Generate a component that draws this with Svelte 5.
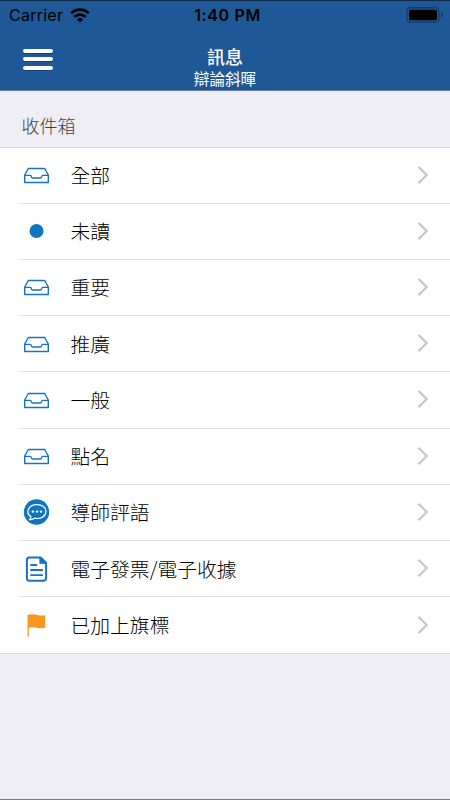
<script lang="ts">
  type Icon = 'tray' | 'dot' | 'chat' | 'document' | 'flag';

  interface Mailbox {
    label: string;
    icon: Icon;
  }

  export let title = '訊息';
  export let subtitle = '辯論斜暉';
  export let mailboxes: Mailbox[] = [
    { label: '全部', icon: 'tray' },
    { label: '未讀', icon: 'dot' },
    { label: '重要', icon: 'tray' },
    { label: '推廣', icon: 'tray' },
    { label: '一般', icon: 'tray' },
    { label: '點名', icon: 'tray' },
    { label: '導師評語', icon: 'chat' },
    { label: '電子發票/電子收據', icon: 'document' },
    { label: '已加上旗標', icon: 'flag' }
  ];
</script>

<div class="screen">
  <header class="header">
    <div class="status">
      <div class="status__carrier">
        <span>Carrier</span>
        <svg width="20" height="15" viewBox="0 0 20 15" fill="none" stroke="#000" stroke-width="2.6">
          <path d="M1.2 5.2a12.6 12.6 0 0 1 17.6 0" />
          <path d="M4.3 8.9a8.2 8.2 0 0 1 11.4 0" />
          <path d="M10 14.6l-3-3.1a4.3 4.3 0 0 1 6 0z" fill="#000" stroke="none" />
        </svg>
      </div>
      <span class="status__time">1:40 PM</span>
      <svg class="status__battery" width="38" height="16" viewBox="0 0 38 16">
        <rect x="1" y=".8" width="32" height="14.4" rx="3.5" fill="none" stroke="#123a66" stroke-width="1.2" />
        <rect x="3" y="2.8" width="28" height="10.4" rx="1.5" />
        <path d="M35 5.2q2.2 1 2.2 2.8t-2.2 2.8z" fill="#123a66" />
      </svg>
    </div>
    <div class="nav">
      <button class="nav__menu" aria-label="選單">
        <span></span>
        <span></span>
        <span></span>
      </button>
      <div class="nav__titles">
        <h1>{title}</h1>
        <p>{subtitle}</p>
      </div>
    </div>
  </header>

  <h2 class="section">收件箱</h2>

  <ul class="list">
    {#each mailboxes as mailbox}
      <li class="row">
        <span class="row__icon">
          {#if mailbox.icon === 'tray'}
            <svg width="27" height="28" viewBox="0 0 27 28" fill="none" stroke="#1473c2" stroke-width="1.4" stroke-linejoin="round">
              <path d="M1.700 14L5.300 7.500h16.400l3.600 6.500v7.500H1.700z" />
              <path d="M1.700 14.400h5.500q.9 0 1.200 1.200.3 1.400 1.300 1.400h7.600q1 0 1.300-1.400.3-1.200 1.200-1.200h5.500" />
            </svg>
          {:else if mailbox.icon === 'dot'}
            <svg width="27" height="28" viewBox="0 0 27 28">
              <circle cx="13.5" cy="14" r="7" fill="#1074bf" />
            </svg>
          {:else if mailbox.icon === 'chat'}
            <svg width="27" height="28" viewBox="0 0 27 28">
              <circle cx="13.5" cy="14" r="12.7" fill="#1074bf" />
              <path d="M8 18.8C2.8 15.7 4.2 6.6 14.1 6.6c5.3 0 8.8 3 8.8 6.9 0 4.8-5 8-11.3 6.7-1.5 1.1-3.3 1.6-5.2 1.4 1-.8 1.6-1.7 1.6-2.8z" fill="none" stroke="#fff" stroke-width="1.2" stroke-linejoin="round" />
              <g fill="#fff">
                <circle cx="9.9" cy="13.6" r="1.2" />
                <circle cx="14" cy="13.6" r="1.2" />
                <circle cx="18" cy="13.6" r="1.2" />
              </g>
            </svg>
          {:else if mailbox.icon === 'document'}
            <svg width="27" height="28" viewBox="0 0 27 28" fill="none" stroke="#1473c2" stroke-width="2" stroke-linecap="round" stroke-linejoin="round">
              <path d="M17.600 2.500H6.400A2.500 2.500 0 0 0 3.900 5v18.200a2.500 2.500 0 0 0 2.500 2.500h14.200a2.500 2.500 0 0 0 2.500-2.500V7.800z" />
              <path d="M17 2.700v5.500h5.800z" fill="#1473c2" stroke-width="1.3" />
              <path d="M8 10h5.500M8 15h11.200M8 20.200h11.200" stroke-width="1.8" />
            </svg>
          {:else}
            <svg width="27" height="28" viewBox="0 0 27 28" fill="#f8961d">
              <path d="M4.500 4.100C8 2.600 11 3.200 14 3.900c3 .7 5.500.7 8.200.3v12.500c-3 .9-5.400.7-8.200 0-2.800-.7-5.500-.7-8.200 0v8.800H4.500z" />
            </svg>
          {/if}
        </span>
        <span class="row__content">
          <span>{mailbox.label}</span>
          <svg width="12" height="20" viewBox="0 0 12 20" fill="none" stroke="#c6c6ca" stroke-width="2.3">
            <path d="M1.400 1.700L9.700 10l-8.300 8.300" />
          </svg>
        </span>
      </li>
    {/each}
  </ul>
</div>

<style>
  :global(body) {
    margin: 0;
    background: #efeef4;
  }

  .screen {
    box-sizing: border-box;
    height: 800px;
    overflow: hidden;
    border-bottom: 1px solid #77767a;
    background: #efeef4;
    color: #000;
    font-family: 'Noto Sans CJK TC', sans-serif;
  }

  .header {
    box-sizing: border-box;
    height: 91px;
    border-top: 1px solid #0f2c4c;
    border-bottom: 1px solid #6b82a8;
    background: #1e5896;
    color: #fff;
  }

  .status {
    display: grid;
    grid-template-columns: 1fr auto 1fr;
    align-items: center;
    height: 28px;
    padding: 0 6px 0 9px;
    color: #000;
    font-family: Inter, sans-serif;
    font-size: 16px;
    letter-spacing: 0.25px;
  }

  .status__carrier {
    display: flex;
    align-items: center;
    gap: 7px;
  }

  .status__time {
    padding-left: 2px;
    font-weight: 600;
    letter-spacing: 0.65px;
  }

  .status__battery {
    justify-self: end;
  }

  .nav {
    display: grid;
    grid-template-columns: 54px 1fr 54px;
    height: 61px;
  }

  .nav__menu {
    display: flex;
    flex-direction: column;
    gap: 4.4px;
    width: 31px;
    height: 24px;
    margin: 20px 0 0 23px;
    padding: 0;
    border: 0;
    background: none;
  }

  .nav__menu span {
    flex: none;
    width: 30px;
    height: 4px;
    border-radius: 2px;
    background: #fff;
    box-shadow: 0 1px 0 #173f73;
  }

  .nav__titles {
    padding-top: 15px;
    text-align: center;
  }

  .nav__titles h1 {
    margin: 0;
    font-size: 18px;
    font-weight: 500;
    line-height: 24px;
  }

  .nav__titles p {
    margin: 0;
    font-size: 15.6px;
    line-height: 20px;
  }

  .section {
    box-sizing: border-box;
    height: 56px;
    margin: 0;
    padding: 20px 21.5px 0;
    color: #3f3f43;
    font-size: 18px;
    font-weight: 300;
    line-height: 28px;
  }

  .list {
    margin: 0;
    padding: 0;
    list-style: none;
    border-top: 1px solid #dcdce0;
    border-bottom: 1px solid #dcdce0;
    background: #fff;
  }

  .row {
    display: flex;
    align-items: center;
    height: 56.25px;
    padding-left: 21px;
  }

  .row:first-child,
  .row:last-child {
    height: 55.5px;
  }

  .row__icon {
    display: flex;
    width: 28px;
    margin: 0 -28px 1px 2px;
  }

  .row__content {
    display: flex;
    flex: 1;
    align-items: center;
    justify-content: space-between;
    box-sizing: border-box;
    height: 100%;
    margin-left: -2px;
    padding: 0 21px 1px 49.5px;
    border-bottom: 1px solid #e0e0e2;
    font-size: 19.8px;
    font-weight: 300;
  }

  .row:last-child .row__content {
    border-bottom: 0;
  }
</style>
